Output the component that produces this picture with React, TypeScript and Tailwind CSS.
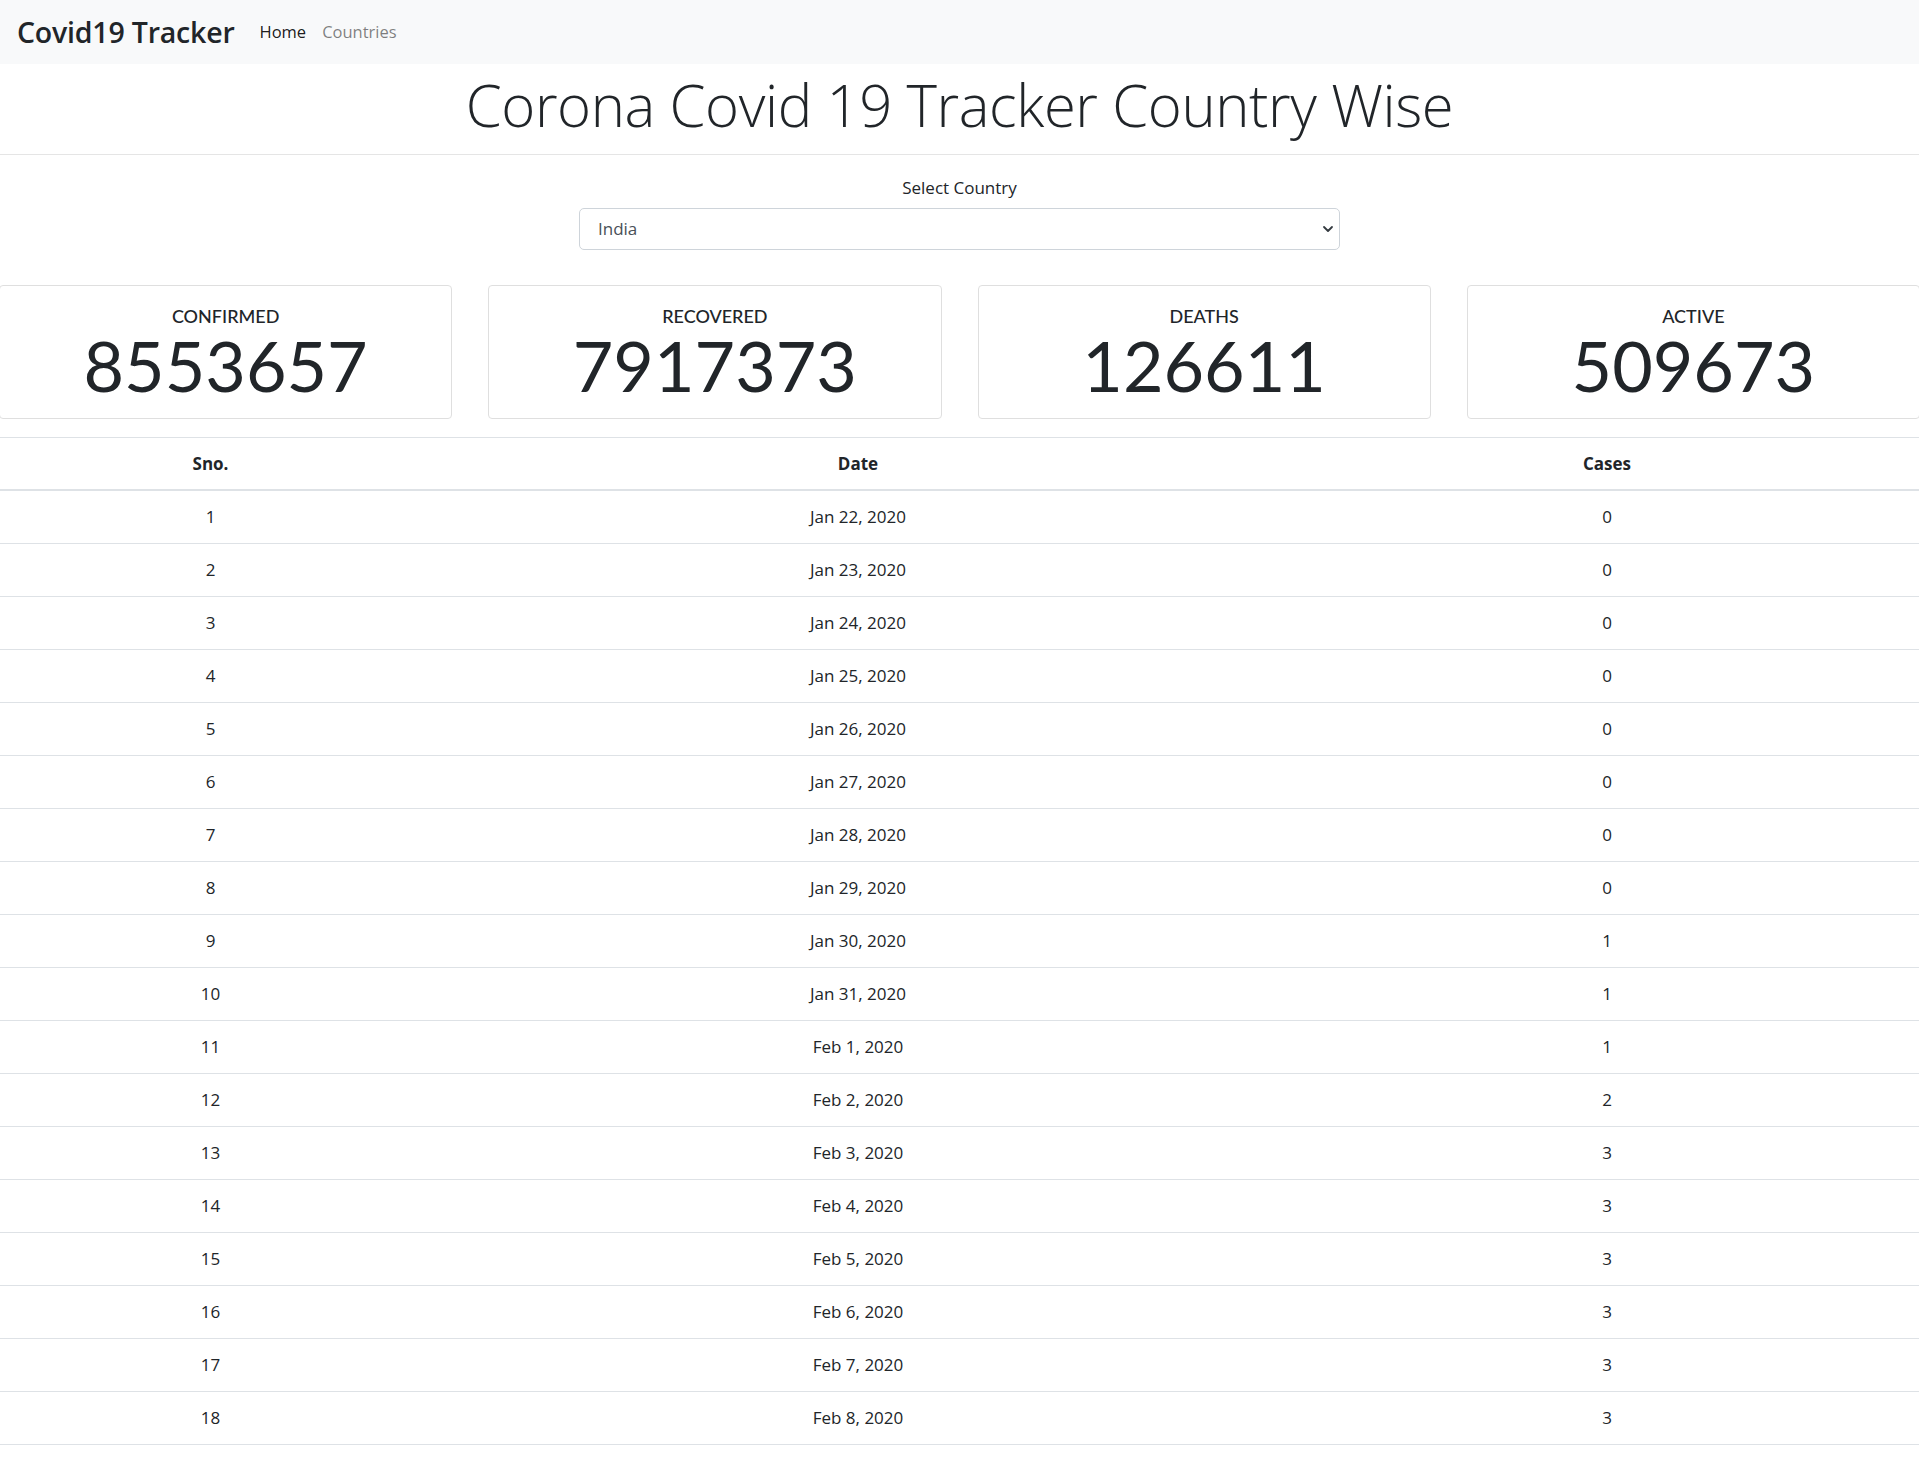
import { useState } from 'react';

interface Stat {
  label: string;
  value: number;
}

const stats: Stat[] = [
  { label: 'CONFIRMED', value: 8553657 },
  { label: 'RECOVERED', value: 7917373 },
  { label: 'DEATHS', value: 126611 },
  { label: 'ACTIVE', value: 509673 },
];

const cases = [0, 0, 0, 0, 0, 0, 0, 0, 1, 1, 1, 2, 3, 3, 3, 3, 3, 3, 3, 3, 3, 3, 3, 3];

const months = ['Jan', 'Feb', 'Mar', 'Apr', 'May', 'Jun', 'Jul', 'Aug', 'Sep', 'Oct', 'Nov', 'Dec'];

function formatDate(d: Date) {
  return `${months[d.getMonth()]} ${d.getDate()}, ${d.getFullYear()}`;
}

const rows = cases.map((c, i) => {
  const d = new Date(2020, 0, 22 + i);
  return { sno: i + 1, date: formatDate(d), cases: c };
});

const bodyFont = { fontFamily: '"Open Sans", "Noto Sans", "Liberation Sans", sans-serif' };

export default function App() {
  const [country, setCountry] = useState('India');

  return (
    <div className="min-h-screen bg-white text-[#212529] overflow-x-hidden" style={bodyFont}>
      {/* navbar */}
      <nav className="h-[64px] bg-[#f8f9fa] flex items-center px-[17px]">
        <a className="text-[28.5px] font-semibold text-[#212529] tracking-[-0.2px] mr-[17px]">Covid19 Tracker</a>
        <a className="px-[8px] text-[16.5px] text-black/90">Home</a>
        <a className="px-[8px] text-[16.5px] text-black/50">Countries</a>
      </nav>

      <div className="h-[91px] flex items-center justify-center border-b border-[#e5e5e5]">
        <h1 className="text-[58px] font-light leading-none tracking-[-0.4px] pb-[9px]">
          Corona Covid 19 Tracker Country Wise
        </h1>
      </div>

      {/* country picker */}
      <div className="flex flex-col items-center pt-[21px]">
        <label className="text-[17px] leading-[24px]">Select Country</label>
        <div className="relative mt-[8px] w-[761px]">
          <select
            value={country}
            onChange={(e) => setCountry(e.target.value)}
            className="w-full h-[42px] appearance-none border border-[#ced4da] rounded-[5px] bg-white pl-[18px] text-[17px] text-[#495057] outline-none"
          >
            <option>India</option>
            <option>United States</option>
            <option>Brazil</option>
          </select>
          <svg
            className="pointer-events-none absolute right-[6px] top-[16px]"
            width="12"
            height="10"
            viewBox="0 0 12 10"
            fill="none"
            stroke="#343a40"
            strokeWidth="1.8"
            strokeLinecap="round"
            strokeLinejoin="round"
          >
            <path d="M2 3l4 4 4-4" />
          </svg>
        </div>
      </div>

      {/* stat cards */}
      <div className="overflow-hidden mt-[35px]">
        <div className="grid grid-cols-4 gap-[36px] -mx-[1px]">
          {stats.map((s) => (
            <div
              key={s.label}
              className="border border-[#dfdfdf] rounded-[4px] pt-[20px] pb-[14px] text-center"
              style={{ fontFamily: 'Lato, "Open Sans", sans-serif' }}
            >
              <div className="text-[18px] leading-[20px] font-medium">{s.label}</div>
              <div className="text-[70px] leading-[78px]">{s.value}</div>
            </div>
          ))}
        </div>
      </div>

      {/* table */}
      <div className="mt-[18px] text-[17px]">
        <div className="grid grid-cols-[421px_874px_1fr] h-[54px] border-t border-b-2 border-[#dee2e6] items-center text-center font-bold">
          <div>Sno.</div>
          <div>Date</div>
          <div>Cases</div>
        </div>
        {rows.map((r) => (
          <div
            key={r.sno}
            className="grid grid-cols-[421px_874px_1fr] h-[53px] border-b border-[#dee2e6] items-center text-center"
          >
            <div>{r.sno}</div>
            <div>{r.date}</div>
            <div>{r.cases}</div>
          </div>
        ))}
      </div>
    </div>
  );
}
